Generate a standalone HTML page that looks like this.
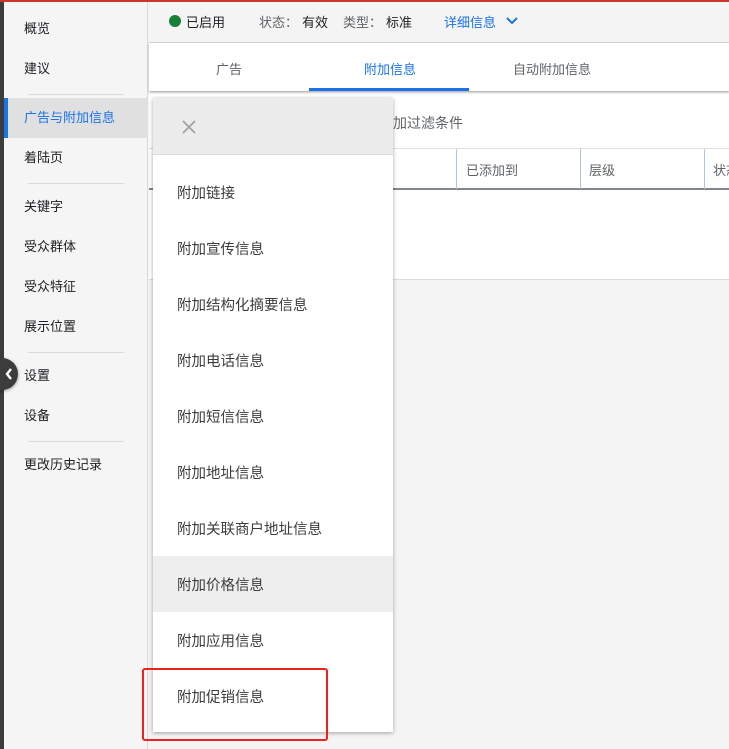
<!DOCTYPE html>
<html><head><meta charset="utf-8"><style>
*{margin:0;padding:0;box-sizing:border-box}
body{width:729px;height:749px;overflow:hidden;background:#f4f4f4;font-family:"Liberation Sans","Noto Sans CJK SC",sans-serif;font-size:13px;color:#202124;position:relative}
.abs{position:absolute;white-space:nowrap}
.red{left:0;top:0;width:729px;height:2px;background:#c8372d}
.dark{left:0;top:0;width:4px;height:749px;background:#3c3c3c}
.side{left:4px;top:2px;width:144px;height:747px;background:#f5f5f5;border-right:1px solid #dadada}
.si{position:absolute;left:20px;font-size:13px;line-height:16px;color:#202124;white-space:nowrap}
.ln{position:absolute;left:24px;width:96px;height:1px;background:#dadada}
.hdr{left:149px;top:2px;width:580px;height:41px;background:#f4f4f4;border-bottom:1px solid #d6d6d6}
.tabs{left:149px;top:43px;width:580px;height:48px;background:#fff;box-shadow:0 1px 2px rgba(0,0,0,.35)}
.card{left:149px;top:94px;width:580px;height:186px;background:#fff;border-bottom:1px solid #dcdcdc;overflow:hidden}
.dd{left:153px;top:98px;width:240px;height:634px;background:#fff;box-shadow:0 1px 4px rgba(0,0,0,.35)}
.it{position:absolute;left:0;width:240px;height:56px;line-height:60px;padding-left:24px;color:#3c3c3c;font-size:14.5px;white-space:nowrap}
</style></head><body>
<div class="abs side">
<div class="si" style="top:19px">概览</div>
<div class="si" style="top:59px">建议</div>
<div class="ln" style="top:92px"></div>
<div style="position:absolute;left:0;top:96px;width:144px;height:40px;background:#e0e0e0;border-left:4px solid #1a73e8"></div>
<div class="si" style="top:108px;color:#1a73e8">广告与附加信息</div>
<div class="si" style="top:148px">着陆页</div>
<div class="ln" style="top:181px"></div>
<div class="si" style="top:197px">关键字</div>
<div class="si" style="top:237px">受众群体</div>
<div class="si" style="top:277px">受众特征</div>
<div class="si" style="top:317px">展示位置</div>
<div class="ln" style="top:350px"></div>
<div class="si" style="top:366px">设置</div>
<div class="si" style="top:406px">设备</div>
<div class="ln" style="top:439px"></div>
<div class="si" style="top:455px">更改历史记录</div>
</div>
<div class="abs dark"></div>
<div class="abs red"></div>
<div class="abs" style="left:-14px;top:358px;width:32px;height:32px;border-radius:50%;background:#3c3c3c;box-shadow:0 1px 3px rgba(0,0,0,.4)"></div>
<svg class="abs" style="left:4px;top:367px" width="10" height="14"><path d="M7 2 L3 7 L7 12" stroke="#fff" stroke-width="2.4" fill="none"/></svg>
<div class="abs hdr">
<div class="abs" style="left:20px;top:13px;width:12px;height:12px;border-radius:50%;background:#188038"></div>
<div class="abs" style="left:37px;top:10px">已启用</div>
<div class="abs" style="left:110px;top:10px;color:#5f6368">状态：</div>
<div class="abs" style="left:153px;top:10px">有效</div>
<div class="abs" style="left:194px;top:10px;color:#5f6368">类型：</div>
<div class="abs" style="left:237px;top:10px">标准</div>
<div class="abs" style="left:295px;top:10px;color:#1a73e8">详细信息</div>
<svg class="abs" style="left:356px;top:14px" width="14" height="10"><path d="M2 2 L7 7 L12 2" stroke="#1a73e8" stroke-width="2" fill="none"/></svg>
</div>
<div class="abs tabs">
<div class="abs" style="left:67px;top:16px;color:#5f6368">广告</div>
<div class="abs" style="left:215px;top:16px;color:#1a73e8">附加信息</div>
<div class="abs" style="left:160px;top:45px;width:160px;height:3px;background:#1a73e8"></div>
<div class="abs" style="left:364px;top:16px;color:#5f6368">自动附加信息</div>
</div>
<div class="abs card">
<div class="abs" style="left:230px;top:19px;font-size:14px;color:#5f6368">添加过滤条件</div>
<div class="abs" style="left:0;top:54px;width:580px;height:42px;border-top:1px solid #e0e0e0;border-bottom:2px solid #80868b"></div>
<div class="abs" style="left:307px;top:55px;width:1px;height:40px;background:#aac4ec"></div>
<div class="abs" style="left:431px;top:55px;width:1px;height:40px;background:#aac4ec"></div>
<div class="abs" style="left:555px;top:55px;width:1px;height:40px;background:#aac4ec"></div>
<div class="abs" style="left:317px;top:66px;color:#5f6368">已添加到</div>
<div class="abs" style="left:440px;top:66px;color:#5f6368">层级</div>
<div class="abs" style="left:564px;top:66px;color:#5f6368">状态</div>
</div>
<div class="abs dd">
<div class="abs" style="left:0;top:0;width:240px;height:57px;background:#ececec;border-bottom:1px solid #dcdcdc"></div>
<svg class="abs" style="left:28px;top:21px" width="16" height="16"><path d="M2 2 L14 14 M14 2 L2 14" stroke="#9e9e9e" stroke-width="1.6"/></svg>
<div class="it" style="top:66px">附加链接</div>
<div class="it" style="top:122px">附加宣传信息</div>
<div class="it" style="top:178px">附加结构化摘要信息</div>
<div class="it" style="top:234px">附加电话信息</div>
<div class="it" style="top:290px">附加短信信息</div>
<div class="it" style="top:346px">附加地址信息</div>
<div class="it" style="top:402px">附加关联商户地址信息</div>
<div class="it" style="top:458px;background:#eeeeee">附加价格信息</div>
<div class="it" style="top:514px">附加应用信息</div>
<div class="it" style="top:570px">附加促销信息</div>
</div>
<div class="abs" style="left:142px;top:668px;width:186px;height:73px;border:2px solid #f0201a;border-radius:3px"></div>
</body></html>
